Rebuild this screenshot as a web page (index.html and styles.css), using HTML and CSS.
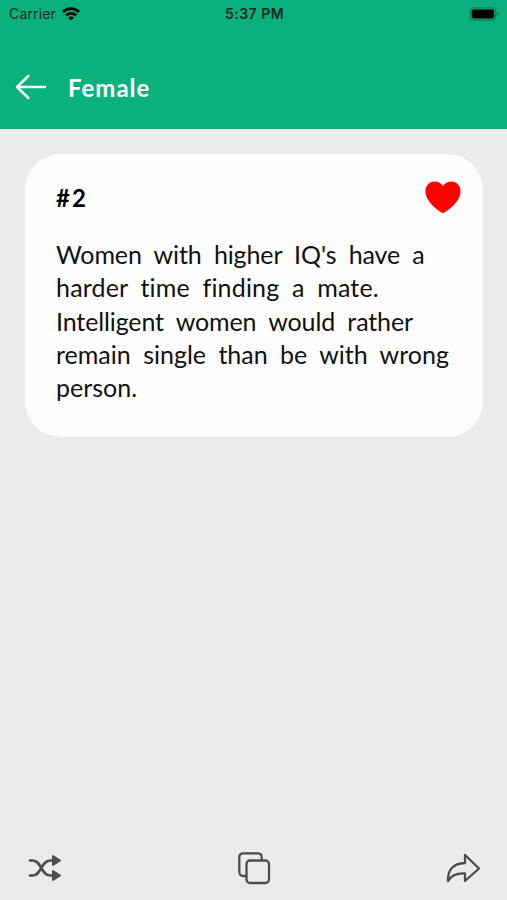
FILE: index.html
```html
<!DOCTYPE html>
<html lang="en">
<head>
    <meta charset="UTF-8">
    <meta name="viewport" content="width=device-width, initial-scale=1.0">
    <title>Female</title>
    <link rel="stylesheet" href="styles.css">
</head>
<body>
    <div class="screen">
        <header class="header">
            <div class="status-bar">
                <div class="carrier">
                    <span>Carrier</span>
                    <svg class="wifi" width="18" height="14" viewBox="0 0 18 14" fill="none" stroke="#000" stroke-width="2.7">
                        <path d="M1 5C5.5 .5 12.500 .5 17 5"/>
                        <path d="M4 8.400C6.800 5.600 11.200 5.600 14 8.400"/>
                        <path d="M6.200 10.700C7.800 9.200 10.200 9.200 11.800 10.700L9 13.600Z" fill="#000" stroke="none"/>
                    </svg>
                </div>
                <div class="time">5:37 PM</div>
                <svg class="battery" width="31" height="14" viewBox="0 0 31 14">
                    <rect x=".8" y=".8" width="26" height="12.4" rx="3.6" fill="none" stroke="#067d57" stroke-width="1.3"/>
                    <rect x="2.6" y="2.6" width="22.6" height="8.8" rx="2" fill="#000"/>
                    <path d="M28.3 5v4c2-.8 2-3.2 0-4z" fill="#067d57"/>
                </svg>
            </div>
            <div class="nav">
                <svg class="back" width="32" height="26" viewBox="0 0 32 26" fill="none" stroke="#fff" stroke-width="2.5" stroke-linecap="round" stroke-linejoin="round">
                    <path d="M13.3 2L2 13l11.3 11M2 13h28"/>
                </svg>
                <h1>Female</h1>
            </div>
        </header>

        <main class="content">
            <div class="card">
                <div class="card-top">
                    <span class="number">#2</span>
                    <svg class="heart" width="36" height="33" viewBox="0 0 36 33" fill="#f00">
                        <path d="M18 32C14 30.500 .5 21 .5 10.200C.5 4.500 4.500 .5 9.500 .5c3.600 0 6.800 1.800 8.500 4.500C19.700 2.300 22.900 .5 26.500 .5c5 0 9 4 9 9.700C35.500 21 22 30.500 18 32z"/>
                    </svg>
                </div>
                <p class="fact">
                    <span class="line tight">Women with higher IQ's have a</span>
                    <span class="line loose">harder time finding a mate.</span>
                    <span class="line tight">Intelligent women would rather</span>
                    <span class="line">remain single than be with wrong</span>
                    <span class="line">person.</span>
                </p>
            </div>
        </main>

        <footer class="toolbar">
            <svg width="34" height="28" viewBox="0 0 34 28" fill="none" stroke="#4d4d4b" stroke-width="2.7" stroke-linecap="round" stroke-linejoin="round">
                <path d="M2 6.500h3c8 0 8.500 15 17 15h3M2 21.500h3c8 0 8.500-15 17-15h3"/>
                <path d="M25 2v9L32 6.500zM25 17v9l7-4.500z" fill="#4d4d4b" stroke-width="2"/>
            </svg>
            <svg width="34" height="34" viewBox="0 0 34 34" fill="none" stroke="#4d4d4b" stroke-width="2.300" stroke-linejoin="round">
                <rect x="9.500" y="9.500" width="22.500" height="22.500" rx="3.500"/>
                <path d="M9.500 25H6a3.700 3.700 0 0 1-3.700-3.700V6A3.700 3.700 0 0 1 6 2.300h15A3.700 3.700 0 0 1 24.700 6v3.500"/>
            </svg>
            <svg width="35" height="30" viewBox="0 0 35 30" fill="none" stroke="#4d4d4b" stroke-width="2.300" stroke-linejoin="round">
                <path d="M19 2l14 13.500L19 28v-7.500C10.500 20 5.500 22 2 28C1.500 17 7 10.500 19 10z"/>
            </svg>
        </footer>
    </div>
</body>
</html>
```
FILE: styles.css
```css
body {
    margin: 0;
    background: #ebebe9;
    color: #111;
    font-family: Lato, sans-serif;
}

.screen {
    display: flex;
    flex-direction: column;
    height: 900px;
}

svg {
    display: block;
}

.header {
    height: 129px;
    background: #0bb17d;
}

.status-bar {
    display: grid;
    grid-template-columns: 1fr auto 1fr;
    align-items: center;
    height: 27px;
    padding: 0 7px 0 9px;
    font-family: Inter, sans-serif;
    font-size: 14px;
    color: #06291e;
}

.carrier {
    display: flex;
    align-items: center;
    gap: 6px;
    letter-spacing: 0.15px;
}

.time {
    font-weight: 600;
    letter-spacing: 0.5px;
}

.battery {
    justify-self: end;
}

.nav {
    display: flex;
    align-items: center;
    gap: 20px;
    height: 60px;
    padding: 30px 15px 0;
}

.nav h1 {
    margin: 0 0 0 1px;
    color: #fff;
    font-size: 24px;
    font-weight: 700;
    letter-spacing: 1px;
}

.content {
    flex: 1;
    padding: 25px 24px 0 25px;
}

.card {
    box-sizing: border-box;
    height: 283px;
    padding: 27px 22px 0 31px;
    border-radius: 36px;
    background: #fdfdfd;
}

.card-top {
    display: flex;
    justify-content: space-between;
}

.number {
    font-size: 24px;
    font-weight: 700;
    line-height: 33px;
    letter-spacing: 2px;
    color: #000;
}

.fact {
    margin: 24px 0 0;
    font-size: 25px;
    line-height: 33.3px;
    word-spacing: 6px;
    white-space: nowrap;
}

.line {
    display: block;
}

.line.tight {
    letter-spacing: -0.12px;
}

.line.loose {
    letter-spacing: 0.18px;
}

.toolbar {
    display: flex;
    align-items: center;
    justify-content: space-between;
    height: 64px;
    padding: 0 26px 0 28px;
}
```
